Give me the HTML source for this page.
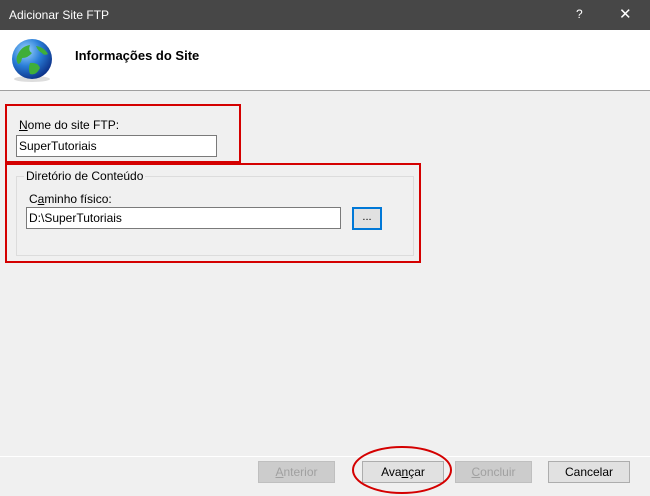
<!DOCTYPE html>
<html><head><style>
body{margin:0;width:650px;height:496px;background:#f0f0f0;font-family:"Liberation Sans",sans-serif;font-size:12px;position:relative;overflow:hidden;color:#000}
.a{position:absolute}
.inp{position:absolute;background:#fff;border:1px solid #7a7a7a;box-sizing:border-box;padding:3px 2px;font-size:12px}
.btn{position:absolute;top:461px;height:22px;box-sizing:border-box;border:1px solid #adadad;background:#e1e1e1;text-align:center;line-height:20px;font-size:12px}
.dis{color:#a0a0a0;background:#ccc;border-color:#bfbfbf}
</style></head><body>
<div class="a" style="left:0;top:0;width:650px;height:30px;background:#474747;color:#fff;font-size:12px">
 <span class="a" style="left:9px;top:8px">Adicionar Site FTP</span>
 <span class="a" style="left:576px;top:7px">?</span>
 <span class="a" style="left:619px;top:5px;font-size:15px">✕</span>
</div>
<div class="a" style="left:0;top:30px;width:650px;height:60px;background:#fff;border-bottom:1px solid #a0a0a0"></div>
<svg class="a" style="left:8px;top:36px" width="48" height="48" viewBox="0 0 48 48">
<defs><radialGradient id="g" cx="0.35" cy="0.3" r="0.75"><stop offset="0" stop-color="#9fd6ff"/><stop offset="0.5" stop-color="#2a7ed8"/><stop offset="1" stop-color="#0b2f86"/></radialGradient></defs>
<ellipse cx="24" cy="43" rx="18" ry="3" fill="#ddd"/>
<circle cx="24" cy="23" r="20" fill="url(#g)"/>
<path d="M10 18 Q14 10 22 9 Q20 15 24 17 Q20 22 14 22 Q13 28 10 28 Q7 23 10 18Z" fill="#3fae3a"/>
<path d="M28 10 Q36 11 40 18 Q36 20 34 17 Q30 15 28 10Z" fill="#3fae3a"/>
<path d="M22 27 Q30 26 32 32 Q28 40 22 38 Q20 33 22 27Z" fill="#3fae3a"/>
</svg>
<div class="a" style="left:75px;top:48px;font-weight:bold;font-size:13px">Informações do Site</div>
<div class="a" style="left:19px;top:118px"><u>N</u>ome do site FTP:</div>
<div class="inp" style="left:16px;top:135px;width:201px;height:22px">SuperTutoriais</div>
<div class="a" style="left:16px;top:176px;width:398px;height:80px;border:1px solid #dcdcdc;box-sizing:border-box"></div>
<div class="a" style="left:24px;top:169px;background:#f0f0f0;padding:0 2px">Diretório de Conteúdo</div>
<div class="a" style="left:29px;top:192px">C<u>a</u>minho físico:</div>
<div class="inp" style="left:26px;top:207px;width:315px;height:22px">D:\SuperTutoriais</div>
<div class="a" style="left:352px;top:207px;width:30px;height:23px;border:2px solid #0078d7;box-sizing:border-box;background:#e1e1e1;text-align:center;line-height:16px;font-size:11px">...</div>
<div class="a" style="left:5px;top:104px;width:236px;height:59px;border:2px solid #d40000;box-sizing:border-box"></div>
<div class="a" style="left:5px;top:163px;width:416px;height:100px;border:2px solid #d40000;box-sizing:border-box"></div>
<div class="a" style="left:0;top:456px;width:650px;height:1px;background:#fff"></div>
<div class="btn dis" style="left:258px;width:77px"><u>A</u>nterior</div>
<div class="btn" style="left:362px;width:82px">Ava<u>n</u>çar</div>
<div class="btn dis" style="left:455px;width:77px"><u>C</u>oncluir</div>
<div class="btn" style="left:548px;width:82px">Cancelar</div>
<svg class="a" style="left:350px;top:444px" width="106" height="52"><ellipse cx="52" cy="26" rx="49" ry="23" fill="none" stroke="#d40000" stroke-width="2"/></svg>
</body></html>
